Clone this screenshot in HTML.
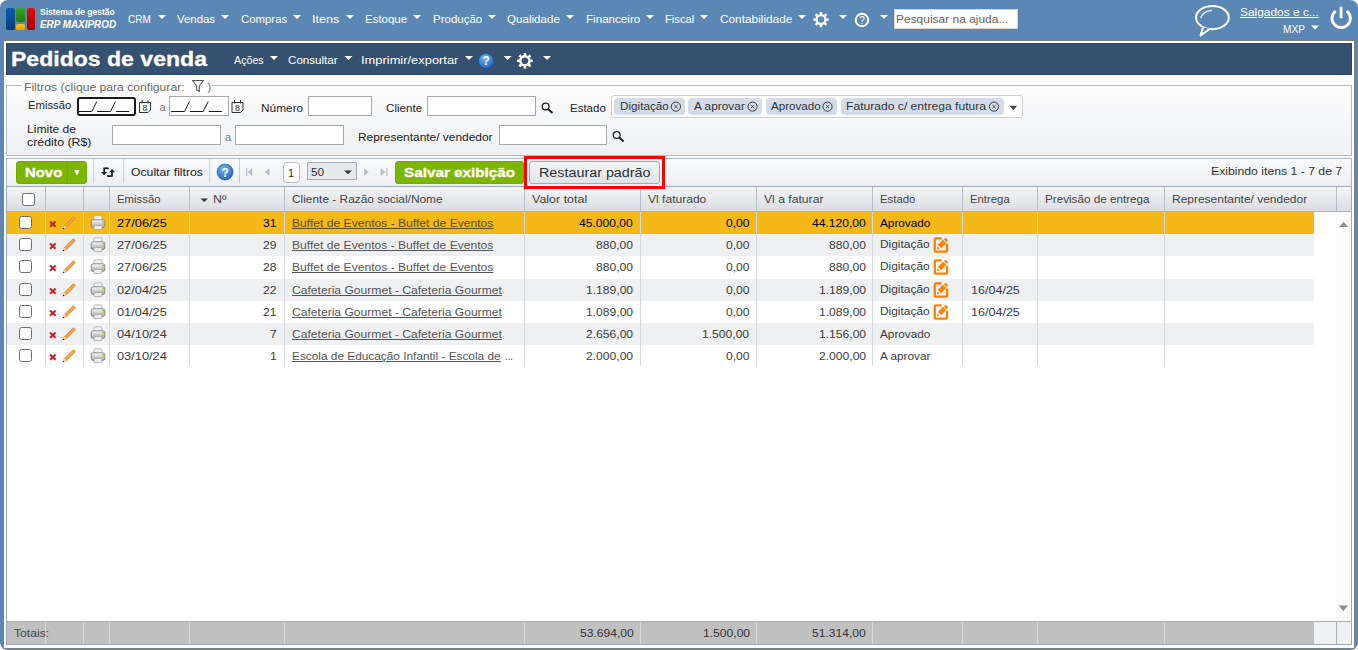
<!DOCTYPE html>
<html><head><meta charset="utf-8"><style>
html,body{margin:0;padding:0;}
body{width:1358px;height:650px;position:relative;overflow:hidden;background:#f6f5f2;font-family:"Liberation Sans", sans-serif;}
.a{position:absolute;box-sizing:border-box;}
.t{position:absolute;white-space:nowrap;font-family:"Liberation Sans", sans-serif;transform-origin:0 0;}
svg{position:absolute;overflow:visible;}
</style></head><body>
<!-- outer blue -->
<div class="a" style="left:0;top:0;width:1358px;height:650px;background:#5b87b4;border-radius:8px;"></div>
<!-- logo -->
<div class="a" style="left:6px;top:8px;width:8.6px;height:21.5px;border-radius:2px;background:linear-gradient(#0b5fa8,#083d7a);"></div>
<div class="a" style="left:16.3px;top:8px;width:8.3px;height:13.6px;border-radius:2px;background:linear-gradient(#3aa41c,#1f7a10);"></div>
<div class="a" style="left:16.3px;top:23.5px;width:8.3px;height:6px;border-radius:1.5px;background:linear-gradient(#f7c21a,#e8a200);"></div>
<div class="a" style="left:26.5px;top:8px;width:8.6px;height:21.5px;border-radius:2px;background:linear-gradient(#e01010,#a80000);"></div>
<!-- nav triangles -->
<svg width="1358" height="45" style="left:0;top:0">
 <g fill="#fff">
  <path d="M158 15h8l-4 4z"/><path d="M221 15h8l-4 4z"/><path d="M293 15h8l-4 4z"/><path d="M346 15h8l-4 4z"/>
  <path d="M413 15h8l-4 4z"/><path d="M488 15h8l-4 4z"/><path d="M566 15h8l-4 4z"/><path d="M646 15h8l-4 4z"/>
  <path d="M700 15h8l-4 4z"/><path d="M798 15h8l-4 4z"/><path d="M839 15h8l-4 4z"/><path d="M880 15h8l-4 4z"/>
  <path d="M1311 25.4h8l-4 4z"/>
 </g>
 <!-- gear top -->
<g transform="translate(821,19.6)">
 <circle r="4.45" fill="none" stroke="#fff" stroke-width="2.30"/>
 <g fill="#fff">
  <rect x="-1.25" y="-7.60" width="2.50" height="2.60" transform="rotate(0)"/>
  <rect x="-1.25" y="-7.60" width="2.50" height="2.60" transform="rotate(45)"/>
  <rect x="-1.25" y="-7.60" width="2.50" height="2.60" transform="rotate(90)"/>
  <rect x="-1.25" y="-7.60" width="2.50" height="2.60" transform="rotate(135)"/>
  <rect x="-1.25" y="-7.60" width="2.50" height="2.60" transform="rotate(180)"/>
  <rect x="-1.25" y="-7.60" width="2.50" height="2.60" transform="rotate(225)"/>
  <rect x="-1.25" y="-7.60" width="2.50" height="2.60" transform="rotate(270)"/>
  <rect x="-1.25" y="-7.60" width="2.50" height="2.60" transform="rotate(315)"/>
 </g>
</g>
 <!-- help top -->
 <circle cx="862" cy="20" r="6.2" fill="none" stroke="#fff" stroke-width="2"/>
 <text x="862" y="23.6" font-family="Liberation Sans" font-size="10" fill="#fff" text-anchor="middle">?</text>
 <!-- chat bubble -->
 <g fill="none" stroke="#fff" stroke-width="2">
  <ellipse cx="1212.4" cy="17.6" rx="16.4" ry="11.6"/>
 </g>
 <path d="M1203 27.5 L1200.5 35.5 L1210 28.8" fill="#5b87b4" stroke="#fff" stroke-width="2" stroke-linejoin="round"/>
 <path d="M1200.5 18 Q1203 11 1212 10.5" fill="none" stroke="#fff" stroke-width="1.3" opacity="0.85"/>
 <!-- power -->
 <path d="M1335.7 11.0 A9.2 9.2 0 1 0 1346.7 11.0" fill="none" stroke="#fff" stroke-width="2.8"/>
 <line x1="1341.1" y1="7.8" x2="1341.1" y2="17.2" stroke="#fff" stroke-width="2.8" stroke-linecap="round"/>
</svg>
<!-- search input -->
<div class="a" style="left:894px;top:9px;width:124px;height:20px;background:#fff;border:1px solid #d8d4cc;"></div>
<!-- light corners top-right/bottom -->
<!-- white frame -->
<div class="a" style="left:3px;top:40px;width:1352px;height:609px;background:#fff;border:1px solid #808080;"></div>
<!-- page header -->
<div class="a" style="left:6px;top:43px;width:1346px;height:32px;background:#35516f;border:1px solid #27476b;"></div>
<svg width="1358" height="100" style="left:0;top:0">
 <g fill="#fff"><path d="M270 56h8l-4 4z"/><path d="M344.5 56h8l-4 4z"/><path d="M465 56h8l-4 4z"/><path d="M503.6 56h8l-4 4z"/><path d="M543 56h8l-4 4z"/></g>
 <defs><radialGradient id="hg" cx="0.4" cy="0.3" r="0.8"><stop offset="0" stop-color="#6fb0f0"/><stop offset="1" stop-color="#1c5bb8"/></radialGradient></defs>
 <circle cx="486.1" cy="61" r="7.6" fill="url(#hg)" stroke="#1a4f9e" stroke-width="0.6"/>
 <text x="486.1" y="65.3" font-family="Liberation Sans" font-size="12" font-weight="bold" fill="#fff" text-anchor="middle">?</text>
<g transform="translate(524.9,60.8)">
 <circle r="4.60" fill="none" stroke="#fff" stroke-width="2.40"/>
 <g fill="#fff">
  <rect x="-1.30" y="-7.80" width="2.60" height="2.60" transform="rotate(0)"/>
  <rect x="-1.30" y="-7.80" width="2.60" height="2.60" transform="rotate(45)"/>
  <rect x="-1.30" y="-7.80" width="2.60" height="2.60" transform="rotate(90)"/>
  <rect x="-1.30" y="-7.80" width="2.60" height="2.60" transform="rotate(135)"/>
  <rect x="-1.30" y="-7.80" width="2.60" height="2.60" transform="rotate(180)"/>
  <rect x="-1.30" y="-7.80" width="2.60" height="2.60" transform="rotate(225)"/>
  <rect x="-1.30" y="-7.80" width="2.60" height="2.60" transform="rotate(270)"/>
  <rect x="-1.30" y="-7.80" width="2.60" height="2.60" transform="rotate(315)"/>
 </g>
</g>
</svg>
<!-- fieldset -->
<div class="a" style="left:6px;top:85px;width:1346px;height:71px;border:1px solid #b2bac4;background:linear-gradient(#fdfdfd,#eef0f3);"></div>
<div class="a" style="left:22px;top:80px;width:190px;height:10px;background:#fdfdfd;"></div>
<svg width="20" height="20" style="left:0;top:0">
 <path d="M192.5 80.5 H203.5 L199.3 86 V91.5 L196.7 90 V86 Z" fill="none" stroke="#555" stroke-width="1.1" stroke-linejoin="round"/>
</svg>
<!-- inputs -->
<div class="a" style="left:76.5px;top:96.7px;width:59px;height:19px;border:2px solid #1a1a1a;border-radius:3px;background:#fff;"></div>
<div class="a" style="left:169.4px;top:96.2px;width:59.5px;height:19.4px;border:1px solid #a9a9a9;background:#fff;"></div>
<div class="a" style="left:308.3px;top:96.2px;width:63.5px;height:19.4px;border:1px solid #a9a9a9;background:#fff;"></div>
<div class="a" style="left:427.3px;top:96.2px;width:108.3px;height:19.6px;border:1px solid #a9a9a9;background:#fff;"></div>
<div class="a" style="left:111.8px;top:125px;width:109px;height:20px;border:1px solid #a9a9a9;background:#fff;"></div>
<div class="a" style="left:235px;top:125px;width:109px;height:20px;border:1px solid #a9a9a9;background:#fff;"></div>
<div class="a" style="left:498.5px;top:125.3px;width:108.2px;height:19.4px;border:1px solid #a9a9a9;background:#fff;"></div>
<svg width="1358" height="200" style="left:0;top:0">
 <!-- date masks -->
 <g stroke="#1a1a1a" stroke-width="1" fill="none">
  <path d="M78.5 111.5h13.2M97.2 111.5h13.2M116 111.5h13.2M91.8 111.5 L96.8 101.5M110.5 111.5 L115.5 101.5"/>
  <path d="M171.2 111.5h13.2M189.9 111.5h13.2M208.7 111.5h13.2M184.5 111.5 L189.5 101.5M203.2 111.5 L208.2 101.5"/>
 </g>
 <!-- calendars -->
 <g fill="none" stroke="#333" stroke-width="1">
  <path d="M139.5 102.5 H150.5 V110 L148 112.5 H139.5 Z"/>
  <path d="M142 100v3.5M148 100v3.5"/>
  <path d="M232 102.5 H243 V110 L240.5 112.5 H232 Z"/>
  <path d="M234.5 100v3.5M240.5 100v3.5"/>
 </g>
 <text x="145" y="111" font-family="Liberation Sans" font-size="9" fill="#333" text-anchor="middle">8</text>
 <text x="237.5" y="111" font-family="Liberation Sans" font-size="9" fill="#333" text-anchor="middle">8</text>
 <!-- search icons -->
 <g stroke="#222" fill="none">
  <circle cx="545.6" cy="106.6" r="3.4" stroke-width="1.3"/><path d="M548.2 109.2 L552.5 113" stroke-width="2"/>
  <circle cx="616.7" cy="135" r="3.4" stroke-width="1.3"/><path d="M619.3 137.6 L623.6 141.4" stroke-width="2"/>
 </g>
</svg>
<!-- estado tag box -->
<div class="a" style="left:610.7px;top:95.3px;width:412px;height:22.3px;border:1px solid #c9d0d8;border-radius:3px;background:#fff;"></div>
<div class="a" style="left:614.2px;top:98.1px;width:71.3px;height:16.7px;border-radius:4px;background:#d3dde9;"></div>
<div class="a" style="left:688.1px;top:98.1px;width:74.4px;height:16.7px;border-radius:4px;background:#d3dde9;"></div>
<div class="a" style="left:765.5px;top:98.1px;width:71.7px;height:16.7px;border-radius:4px;background:#d3dde9;"></div>
<div class="a" style="left:840.5px;top:98.1px;width:163.2px;height:16.7px;border-radius:4px;background:#d3dde9;"></div>
<svg width="1358" height="200" style="left:0;top:0">
 <g fill="none" stroke="#3a3a3a" stroke-width="1.0">
  <circle cx="675.9" cy="106.6" r="4.6"/><path d="M674.3 105l3.2 3.2M677.5 105l-3.2 3.2" stroke-width="0.9"/>
  <circle cx="752.5" cy="106.6" r="4.6"/><path d="M750.9 105l3.2 3.2M754.1 105l-3.2 3.2" stroke-width="0.9"/>
  <circle cx="827.5" cy="106.6" r="4.6"/><path d="M825.9 105l3.2 3.2M829.1 105l-3.2 3.2" stroke-width="0.9"/>
  <circle cx="994" cy="106.6" r="4.6"/><path d="M992.4 105l3.2 3.2M995.6 105l-3.2 3.2" stroke-width="0.9"/>
 </g>
 <path d="M1009.7 105.7h7.3l-3.65 4.6z" fill="#444"/>
</svg>
<!-- toolbar panel -->
<div class="a" style="left:6px;top:158px;width:1346px;height:29px;border:1px solid #aab3be;border-bottom:none;background:linear-gradient(#f9fafb,#eceef1);"></div>
<div class="a" style="left:16.2px;top:161.2px;width:70.5px;height:22.7px;border-radius:3px;background:#7cb600;border:1px solid #74ab00;"></div>
<div class="a" style="left:67.2px;top:161.2px;width:1px;height:22.7px;background:#70a600;"></div>
<svg width="1358" height="200" style="left:0;top:0">
 <path d="M74.2 170h5.5l-2.75 5.8z" fill="#fff"/>
 <g fill="#c9ced5"><rect x="93.2" y="159" width="1" height="24"/><rect x="123" y="159" width="1" height="24"/><rect x="209.3" y="159" width="1" height="24"/><rect x="239" y="159" width="1" height="24"/></g>
 <!-- refresh -->
 <g fill="none" stroke="#222" stroke-width="1.8">
  <path d="M108.6 168.8 Q107 167.6 104.2 168.4 L104.2 173"/>
  <path d="M107.2 175.4 Q109 176.6 112 175.8 L112 171.4"/>
 </g>
 <path d="M101 172 L107.3 172 L104.15 175.2 Z" fill="#222"/>
 <path d="M109 172.2 L115 172.2 L112 169 Z" fill="#222"/>
 <!-- help blue -->
 <defs><radialGradient id="hg2" cx="0.4" cy="0.3" r="0.8"><stop offset="0" stop-color="#78b6f2"/><stop offset="1" stop-color="#1d5cb8"/></radialGradient></defs>
 <circle cx="225.1" cy="172" r="8" fill="url(#hg2)" stroke="#1a4f9e" stroke-width="0.6"/>
 <text x="225.1" y="176.5" font-family="Liberation Sans" font-size="12" font-weight="bold" fill="#fff" text-anchor="middle">?</text>
 <!-- pager -->
 <g fill="#b8bec6">
  <rect x="246" y="168" width="1.2" height="8"/><path d="M252.2 168v8l-4.4-4z"/>
  <path d="M269.4 168v8l-4.6-4z"/>
  <path d="M364.2 168v8l4.4-4z"/>
  <path d="M380.7 168v8l4.6-4z"/><rect x="386.3" y="168" width="1.2" height="8"/>
 </g>
</svg>
<div class="a" style="left:283.1px;top:161.5px;width:16.6px;height:21.1px;border:1px solid #b5bcc5;border-radius:4px;background:#fff;"></div>
<div class="a" style="left:307.3px;top:161.5px;width:49.6px;height:18.1px;border:1px solid #a8aeb6;background:#e6e8eb;"></div>
<svg width="1358" height="200" style="left:0;top:0"><path d="M344 170.4h8l-4 3.8z" fill="#333"/></svg>
<div class="a" style="left:395.2px;top:161.2px;width:128.4px;height:22.7px;border-radius:3px;background:#7cb600;border:1px solid #74ab00;"></div>
<div class="a" style="left:529.2px;top:161.2px;width:130.5px;height:22.7px;border:1px solid #a3a9b1;border-radius:3px;background:linear-gradient(#f4f5f7,#dfe2e6);"></div>
<!-- grid -->
<div class="a" style="left:6px;top:186px;width:1346px;height:459px;border:1px solid #9ea8b3;background:#fff;"></div>
<div class="a" style="left:7px;top:187px;width:1344px;height:25px;border-bottom:1px solid #a9b1bb;background:linear-gradient(#f4f5f7,#d9dce1);"></div>
<div class="a" style="left:45px;top:187px;width:1px;height:24px;background:#b6bdc6;"></div>
<div class="a" style="left:83px;top:187px;width:1px;height:24px;background:#b6bdc6;"></div>
<div class="a" style="left:109px;top:187px;width:1px;height:24px;background:#b6bdc6;"></div>
<div class="a" style="left:189px;top:187px;width:1px;height:24px;background:#b6bdc6;"></div>
<div class="a" style="left:284px;top:187px;width:1px;height:24px;background:#b6bdc6;"></div>
<div class="a" style="left:524px;top:187px;width:1px;height:24px;background:#b6bdc6;"></div>
<div class="a" style="left:640px;top:187px;width:1px;height:24px;background:#b6bdc6;"></div>
<div class="a" style="left:756px;top:187px;width:1px;height:24px;background:#b6bdc6;"></div>
<div class="a" style="left:872px;top:187px;width:1px;height:24px;background:#b6bdc6;"></div>
<div class="a" style="left:962px;top:187px;width:1px;height:24px;background:#b6bdc6;"></div>
<div class="a" style="left:1037px;top:187px;width:1px;height:24px;background:#b6bdc6;"></div>
<div class="a" style="left:1164px;top:187px;width:1px;height:24px;background:#b6bdc6;"></div>
<div class="a" style="left:1336px;top:187px;width:1px;height:24px;background:#b6bdc6;"></div>
<div class="a" style="left:7px;top:212px;width:1307px;height:22px;background:#f4b916;"></div>
<div class="a" style="left:7px;top:234px;width:1307px;height:22px;background:#eff0f2;"></div>
<div class="a" style="left:7px;top:256px;width:1307px;height:23px;background:#ffffff;"></div>
<div class="a" style="left:7px;top:279px;width:1307px;height:22px;background:#eff0f2;"></div>
<div class="a" style="left:7px;top:301px;width:1307px;height:22px;background:#ffffff;"></div>
<div class="a" style="left:7px;top:323px;width:1307px;height:22px;background:#eff0f2;"></div>
<div class="a" style="left:7px;top:345px;width:1307px;height:21px;background:#ffffff;"></div>
<div class="a" style="left:45px;top:212px;width:1px;height:154px;background:#d5d9df;"></div>
<div class="a" style="left:83px;top:212px;width:1px;height:154px;background:#d5d9df;"></div>
<div class="a" style="left:109px;top:212px;width:1px;height:154px;background:#d5d9df;"></div>
<div class="a" style="left:189px;top:212px;width:1px;height:154px;background:#d5d9df;"></div>
<div class="a" style="left:284px;top:212px;width:1px;height:154px;background:#d5d9df;"></div>
<div class="a" style="left:524px;top:212px;width:1px;height:154px;background:#d5d9df;"></div>
<div class="a" style="left:640px;top:212px;width:1px;height:154px;background:#d5d9df;"></div>
<div class="a" style="left:756px;top:212px;width:1px;height:154px;background:#d5d9df;"></div>
<div class="a" style="left:872px;top:212px;width:1px;height:154px;background:#d5d9df;"></div>
<div class="a" style="left:962px;top:212px;width:1px;height:154px;background:#d5d9df;"></div>
<div class="a" style="left:1037px;top:212px;width:1px;height:154px;background:#d5d9df;"></div>
<div class="a" style="left:1164px;top:212px;width:1px;height:154px;background:#d5d9df;"></div>
<div class="a" style="left:1336px;top:212px;width:15px;height:409px;background:#fbfbfb;"></div>
<svg width="1358" height="650" style="left:0;top:0"><path d="M1339 227h9.2l-4.6-5z" fill="#8c8c8c"/><path d="M1338.6 605.6h9.4l-4.7 5.3z" fill="#8c8c8c"/></svg>
<div class="a" style="left:7px;top:621px;width:1344px;height:23px;border-top:1px solid #a6aeb8;background:#eff0f2;"></div>
<div class="a" style="left:7px;top:622px;width:1307px;height:22px;background:#c0c0c0;"></div>
<div class="a" style="left:45px;top:622px;width:1px;height:22px;background:#d9d9d9;"></div>
<div class="a" style="left:83px;top:622px;width:1px;height:22px;background:#d9d9d9;"></div>
<div class="a" style="left:109px;top:622px;width:1px;height:22px;background:#d9d9d9;"></div>
<div class="a" style="left:189px;top:622px;width:1px;height:22px;background:#d9d9d9;"></div>
<div class="a" style="left:284px;top:622px;width:1px;height:22px;background:#d9d9d9;"></div>
<div class="a" style="left:524px;top:622px;width:1px;height:22px;background:#d9d9d9;"></div>
<div class="a" style="left:640px;top:622px;width:1px;height:22px;background:#d9d9d9;"></div>
<div class="a" style="left:756px;top:622px;width:1px;height:22px;background:#d9d9d9;"></div>
<div class="a" style="left:872px;top:622px;width:1px;height:22px;background:#d9d9d9;"></div>
<div class="a" style="left:962px;top:622px;width:1px;height:22px;background:#d9d9d9;"></div>
<div class="a" style="left:1037px;top:622px;width:1px;height:22px;background:#d9d9d9;"></div>
<div class="a" style="left:1164px;top:622px;width:1px;height:22px;background:#d9d9d9;"></div>
<div class="a" style="left:1336px;top:622px;width:1px;height:22px;background:#a6aeb8;"></div>
<div class="a" style="left:22.2px;top:193.3px;width:12.6px;height:12.6px;border:1px solid #6e6e6e;border-radius:2.5px;background:#fff;"></div>
<svg width="1358" height="650" style="left:0;top:0"><path d="M200.5 198.5h7.4l-3.7 3.6z" fill="#333"/></svg>
<div class="a" style="left:19.2px;top:216.3px;width:12.6px;height:12.6px;border:1px solid #6e6e6e;border-radius:2.5px;background:#fff;"></div>
<div class="a" style="left:19.2px;top:238.3px;width:12.6px;height:12.6px;border:1px solid #6e6e6e;border-radius:2.5px;background:#fff;"></div>
<div class="a" style="left:19.2px;top:260.3px;width:12.6px;height:12.6px;border:1px solid #6e6e6e;border-radius:2.5px;background:#fff;"></div>
<div class="a" style="left:19.2px;top:283.3px;width:12.6px;height:12.6px;border:1px solid #6e6e6e;border-radius:2.5px;background:#fff;"></div>
<div class="a" style="left:19.2px;top:305.3px;width:12.6px;height:12.6px;border:1px solid #6e6e6e;border-radius:2.5px;background:#fff;"></div>
<div class="a" style="left:19.2px;top:327.3px;width:12.6px;height:12.6px;border:1px solid #6e6e6e;border-radius:2.5px;background:#fff;"></div>
<div class="a" style="left:19.2px;top:349.3px;width:12.6px;height:12.6px;border:1px solid #6e6e6e;border-radius:2.5px;background:#fff;"></div>
<svg width="1358" height="650" style="left:0;top:0">
<defs><linearGradient id="pb" x1="0" y1="0" x2="0" y2="1"><stop offset="0" stop-color="#fbfbfb"/><stop offset="1" stop-color="#a6a6a6"/></linearGradient></defs>
<path d="M50 221.5l5.6 5.2M55.6 221.5l-5.6 5.2" stroke="#c8202c" stroke-width="2" fill="none"/>
<path d="M64.5 227.6 L74.6 217.4" stroke="#e8892a" stroke-width="3.4" stroke-linecap="butt"/>
<path d="M64.7 227.4 L74.4 217.6" stroke="#f6b468" stroke-width="1.2"/>
<path d="M63.2 228.8 L64.0 225.6 L66.4 228.0 Z" fill="#f3dcc0"/>
<circle cx="63.6" cy="228.5" r="0.8" fill="#222"/>
<rect x="94" y="215.8" width="8" height="5" rx="1" fill="#f2f2f2" stroke="#a8a8a8" stroke-width="0.7"/>
<rect x="91.2" y="219.8" width="13.6" height="7.6" rx="2" fill="url(#pb)" stroke="#707070" stroke-width="0.8"/>
<rect x="94" y="225.4" width="8" height="4.2" rx="0.8" fill="#ececec" stroke="#9a9a9a" stroke-width="0.7"/>
<circle cx="103" cy="221.8" r="0.8" fill="#3cc23c"/><circle cx="103" cy="223.9" r="0.8" fill="#f2b400"/>
<path d="M50 243.5l5.6 5.2M55.6 243.5l-5.6 5.2" stroke="#c8202c" stroke-width="2" fill="none"/>
<path d="M64.5 249.6 L74.6 239.4" stroke="#e8892a" stroke-width="3.4" stroke-linecap="butt"/>
<path d="M64.7 249.4 L74.4 239.6" stroke="#f6b468" stroke-width="1.2"/>
<path d="M63.2 250.8 L64.0 247.6 L66.4 250.0 Z" fill="#f3dcc0"/>
<circle cx="63.6" cy="250.5" r="0.8" fill="#222"/>
<rect x="94" y="237.8" width="8" height="5" rx="1" fill="#f2f2f2" stroke="#a8a8a8" stroke-width="0.7"/>
<rect x="91.2" y="241.8" width="13.6" height="7.6" rx="2" fill="url(#pb)" stroke="#707070" stroke-width="0.8"/>
<rect x="94" y="247.4" width="8" height="4.2" rx="0.8" fill="#ececec" stroke="#9a9a9a" stroke-width="0.7"/>
<circle cx="103" cy="243.8" r="0.8" fill="#3cc23c"/><circle cx="103" cy="245.9" r="0.8" fill="#f2b400"/>
<path d="M941.6 238.4 H935.9 Q934.8 238.4 934.8 239.5 V250.6 Q934.8 251.7 935.9 251.7 H946 Q947.1 251.7 947.1 250.6 V243.8" fill="none" stroke="#ff8000" stroke-width="2.3"/>
<path d="M939.5 246.5 L944.7 241.3" stroke="#ff8000" stroke-width="4.6"/>
<path d="M945.2 237.9 Q947.6 238.2 948 240.6 L946.6 242.0 L943.8 239.3 Z" fill="#ff8000"/>
<path d="M936.9 249.2 L937.6 246.6 L939.6 248.6 Z" fill="#ff8000"/>
<path d="M50 265.5l5.6 5.2M55.6 265.5l-5.6 5.2" stroke="#c8202c" stroke-width="2" fill="none"/>
<path d="M64.5 271.6 L74.6 261.4" stroke="#e8892a" stroke-width="3.4" stroke-linecap="butt"/>
<path d="M64.7 271.4 L74.4 261.6" stroke="#f6b468" stroke-width="1.2"/>
<path d="M63.2 272.8 L64.0 269.6 L66.4 272.0 Z" fill="#f3dcc0"/>
<circle cx="63.6" cy="272.5" r="0.8" fill="#222"/>
<rect x="94" y="259.8" width="8" height="5" rx="1" fill="#f2f2f2" stroke="#a8a8a8" stroke-width="0.7"/>
<rect x="91.2" y="263.8" width="13.6" height="7.6" rx="2" fill="url(#pb)" stroke="#707070" stroke-width="0.8"/>
<rect x="94" y="269.4" width="8" height="4.2" rx="0.8" fill="#ececec" stroke="#9a9a9a" stroke-width="0.7"/>
<circle cx="103" cy="265.8" r="0.8" fill="#3cc23c"/><circle cx="103" cy="267.9" r="0.8" fill="#f2b400"/>
<path d="M941.6 260.4 H935.9 Q934.8 260.4 934.8 261.5 V272.6 Q934.8 273.7 935.9 273.7 H946 Q947.1 273.7 947.1 272.6 V265.8" fill="none" stroke="#ff8000" stroke-width="2.3"/>
<path d="M939.5 268.5 L944.7 263.3" stroke="#ff8000" stroke-width="4.6"/>
<path d="M945.2 259.9 Q947.6 260.2 948 262.6 L946.6 264.0 L943.8 261.3 Z" fill="#ff8000"/>
<path d="M936.9 271.2 L937.6 268.6 L939.6 270.6 Z" fill="#ff8000"/>
<path d="M50 288.5l5.6 5.2M55.6 288.5l-5.6 5.2" stroke="#c8202c" stroke-width="2" fill="none"/>
<path d="M64.5 294.6 L74.6 284.4" stroke="#e8892a" stroke-width="3.4" stroke-linecap="butt"/>
<path d="M64.7 294.4 L74.4 284.6" stroke="#f6b468" stroke-width="1.2"/>
<path d="M63.2 295.8 L64.0 292.6 L66.4 295.0 Z" fill="#f3dcc0"/>
<circle cx="63.6" cy="295.5" r="0.8" fill="#222"/>
<rect x="94" y="282.8" width="8" height="5" rx="1" fill="#f2f2f2" stroke="#a8a8a8" stroke-width="0.7"/>
<rect x="91.2" y="286.8" width="13.6" height="7.6" rx="2" fill="url(#pb)" stroke="#707070" stroke-width="0.8"/>
<rect x="94" y="292.4" width="8" height="4.2" rx="0.8" fill="#ececec" stroke="#9a9a9a" stroke-width="0.7"/>
<circle cx="103" cy="288.8" r="0.8" fill="#3cc23c"/><circle cx="103" cy="290.9" r="0.8" fill="#f2b400"/>
<path d="M941.6 283.4 H935.9 Q934.8 283.4 934.8 284.5 V295.6 Q934.8 296.7 935.9 296.7 H946 Q947.1 296.7 947.1 295.6 V288.8" fill="none" stroke="#ff8000" stroke-width="2.3"/>
<path d="M939.5 291.5 L944.7 286.3" stroke="#ff8000" stroke-width="4.6"/>
<path d="M945.2 282.9 Q947.6 283.2 948 285.6 L946.6 287.0 L943.8 284.3 Z" fill="#ff8000"/>
<path d="M936.9 294.2 L937.6 291.6 L939.6 293.6 Z" fill="#ff8000"/>
<path d="M50 310.5l5.6 5.2M55.6 310.5l-5.6 5.2" stroke="#c8202c" stroke-width="2" fill="none"/>
<path d="M64.5 316.6 L74.6 306.4" stroke="#e8892a" stroke-width="3.4" stroke-linecap="butt"/>
<path d="M64.7 316.4 L74.4 306.6" stroke="#f6b468" stroke-width="1.2"/>
<path d="M63.2 317.8 L64.0 314.6 L66.4 317.0 Z" fill="#f3dcc0"/>
<circle cx="63.6" cy="317.5" r="0.8" fill="#222"/>
<rect x="94" y="304.8" width="8" height="5" rx="1" fill="#f2f2f2" stroke="#a8a8a8" stroke-width="0.7"/>
<rect x="91.2" y="308.8" width="13.6" height="7.6" rx="2" fill="url(#pb)" stroke="#707070" stroke-width="0.8"/>
<rect x="94" y="314.4" width="8" height="4.2" rx="0.8" fill="#ececec" stroke="#9a9a9a" stroke-width="0.7"/>
<circle cx="103" cy="310.8" r="0.8" fill="#3cc23c"/><circle cx="103" cy="312.9" r="0.8" fill="#f2b400"/>
<path d="M941.6 305.4 H935.9 Q934.8 305.4 934.8 306.5 V317.6 Q934.8 318.7 935.9 318.7 H946 Q947.1 318.7 947.1 317.6 V310.8" fill="none" stroke="#ff8000" stroke-width="2.3"/>
<path d="M939.5 313.5 L944.7 308.3" stroke="#ff8000" stroke-width="4.6"/>
<path d="M945.2 304.9 Q947.6 305.2 948 307.6 L946.6 309.0 L943.8 306.3 Z" fill="#ff8000"/>
<path d="M936.9 316.2 L937.6 313.6 L939.6 315.6 Z" fill="#ff8000"/>
<path d="M50 332.5l5.6 5.2M55.6 332.5l-5.6 5.2" stroke="#c8202c" stroke-width="2" fill="none"/>
<path d="M64.5 338.6 L74.6 328.4" stroke="#e8892a" stroke-width="3.4" stroke-linecap="butt"/>
<path d="M64.7 338.4 L74.4 328.6" stroke="#f6b468" stroke-width="1.2"/>
<path d="M63.2 339.8 L64.0 336.6 L66.4 339.0 Z" fill="#f3dcc0"/>
<circle cx="63.6" cy="339.5" r="0.8" fill="#222"/>
<rect x="94" y="326.8" width="8" height="5" rx="1" fill="#f2f2f2" stroke="#a8a8a8" stroke-width="0.7"/>
<rect x="91.2" y="330.8" width="13.6" height="7.6" rx="2" fill="url(#pb)" stroke="#707070" stroke-width="0.8"/>
<rect x="94" y="336.4" width="8" height="4.2" rx="0.8" fill="#ececec" stroke="#9a9a9a" stroke-width="0.7"/>
<circle cx="103" cy="332.8" r="0.8" fill="#3cc23c"/><circle cx="103" cy="334.9" r="0.8" fill="#f2b400"/>
<path d="M50 354.5l5.6 5.2M55.6 354.5l-5.6 5.2" stroke="#c8202c" stroke-width="2" fill="none"/>
<path d="M64.5 360.6 L74.6 350.4" stroke="#e8892a" stroke-width="3.4" stroke-linecap="butt"/>
<path d="M64.7 360.4 L74.4 350.6" stroke="#f6b468" stroke-width="1.2"/>
<path d="M63.2 361.8 L64.0 358.6 L66.4 361.0 Z" fill="#f3dcc0"/>
<circle cx="63.6" cy="361.5" r="0.8" fill="#222"/>
<rect x="94" y="348.8" width="8" height="5" rx="1" fill="#f2f2f2" stroke="#a8a8a8" stroke-width="0.7"/>
<rect x="91.2" y="352.8" width="13.6" height="7.6" rx="2" fill="url(#pb)" stroke="#707070" stroke-width="0.8"/>
<rect x="94" y="358.4" width="8" height="4.2" rx="0.8" fill="#ececec" stroke="#9a9a9a" stroke-width="0.7"/>
<circle cx="103" cy="354.8" r="0.8" fill="#3cc23c"/><circle cx="103" cy="356.9" r="0.8" fill="#f2b400"/>
</svg>
<div class="a" style="left:524px;top:156px;width:141px;height:33px;border:3px solid #ff0000;"></div>
<div class="t" style="left:128.40px;top:13.70px;font-size:11px;line-height:11px;color:#ffffff;transform:scaleX(0.9121);">CRM</div>
<div class="t" style="left:176.70px;top:13.70px;font-size:11px;line-height:11px;color:#ffffff;transform:scaleX(1.0376);">Vendas</div>
<div class="t" style="left:240.70px;top:13.70px;font-size:11px;line-height:11px;color:#ffffff;transform:scaleX(1.0349);">Compras</div>
<div class="t" style="left:311.86px;top:13.70px;font-size:11px;line-height:11px;color:#ffffff;transform:scaleX(1.1436);">Itens</div>
<div class="t" style="left:365.30px;top:13.70px;font-size:11px;line-height:11px;color:#ffffff;transform:scaleX(1.0436);">Estoque</div>
<div class="t" style="left:432.90px;top:13.70px;font-size:11px;line-height:11px;color:#ffffff;transform:scaleX(1.0453);">Produção</div>
<div class="t" style="left:507.30px;top:13.70px;font-size:11px;line-height:11px;color:#ffffff;transform:scaleX(1.0533);">Qualidade</div>
<div class="t" style="left:585.60px;top:13.70px;font-size:11px;line-height:11px;color:#ffffff;transform:scaleX(1.0558);">Financeiro</div>
<div class="t" style="left:665.30px;top:13.70px;font-size:11px;line-height:11px;color:#ffffff;transform:scaleX(1.0219);">Fiscal</div>
<div class="t" style="left:719.80px;top:13.70px;font-size:11px;line-height:11px;color:#ffffff;transform:scaleX(1.0751);">Contabilidade</div>
<div class="t" style="left:39.80px;top:8.00px;font-size:9px;line-height:9px;color:#ffffff;font-weight:bold;transform:scaleX(0.9443);">Sistema de gestão</div>
<div class="t" style="left:39.60px;top:19.60px;font-size:10px;line-height:10px;color:#ffffff;font-weight:bold;font-style:italic;transform:scaleX(0.9895);">ERP MAXIPROD</div>
<div class="t" style="left:896.40px;top:13.60px;font-size:11px;line-height:11px;color:#6a5f55;transform:scaleX(1.0872);">Pesquisar na ajuda...</div>
<div class="t" style="left:1240.00px;top:6.80px;font-size:11px;line-height:11px;color:#ffffff;transform:scaleX(1.0824);text-decoration:underline;">Salgados e c...</div>
<div class="t" style="left:1282.80px;top:23.80px;font-size:11px;line-height:11px;color:#ffffff;transform:scaleX(0.9234);">MXP</div>
<div class="t" style="left:10.55px;top:49.00px;font-size:20px;line-height:20px;color:#ffffff;font-weight:bold;transform:scaleX(1.1523);-webkit-text-stroke:0.3px #fff;">Pedidos de venda</div>
<div class="t" style="left:233.80px;top:55.20px;font-size:11px;line-height:11px;color:#ffffff;transform:scaleX(0.9719);">Ações</div>
<div class="t" style="left:288.00px;top:55.20px;font-size:11px;line-height:11px;color:#ffffff;transform:scaleX(1.0545);">Consultar</div>
<div class="t" style="left:360.53px;top:55.20px;font-size:11px;line-height:11px;color:#ffffff;transform:scaleX(1.1715);">Imprimir/exportar</div>
<div class="t" style="left:24.30px;top:82.40px;font-size:11px;line-height:11px;color:#6e6a66;transform:scaleX(1.1035);">Filtros (clique para configurar:</div>
<div class="t" style="left:207.50px;top:82.40px;font-size:11px;line-height:11px;color:#6e6a66;">)</div>
<div class="t" style="left:27.60px;top:100.20px;font-size:11px;line-height:11px;color:#1c1c24;transform:scaleX(1.0271);">Emissão</div>
<div class="t" style="left:159.60px;top:102.00px;font-size:11px;line-height:11px;color:#7a7a7a;">a</div>
<div class="t" style="left:261.30px;top:102.90px;font-size:11px;line-height:11px;color:#1c1c24;transform:scaleX(1.0793);">Número</div>
<div class="t" style="left:386.00px;top:102.70px;font-size:11px;line-height:11px;color:#1c1c24;transform:scaleX(1.0609);">Cliente</div>
<div class="t" style="left:569.60px;top:102.70px;font-size:11px;line-height:11px;color:#1c1c24;transform:scaleX(1.0460);">Estado</div>
<div class="t" style="left:27.40px;top:123.70px;font-size:11px;line-height:11px;color:#1c1c24;transform:scaleX(1.0985);">Limite de</div>
<div class="t" style="left:27.40px;top:136.80px;font-size:11px;line-height:11px;color:#1c1c24;transform:scaleX(1.1215);">crédito (R$)</div>
<div class="t" style="left:225.00px;top:131.60px;font-size:11px;line-height:11px;color:#7a7a7a;">a</div>
<div class="t" style="left:357.80px;top:131.50px;font-size:11px;line-height:11px;color:#1c1c24;transform:scaleX(1.0837);">Representante/ vendedor</div>
<div class="t" style="left:619.90px;top:101.30px;font-size:11px;line-height:11px;color:#333333;transform:scaleX(1.0625);">Digitação</div>
<div class="t" style="left:693.80px;top:101.30px;font-size:11px;line-height:11px;color:#333333;transform:scaleX(1.0806);">A aprovar</div>
<div class="t" style="left:770.60px;top:101.30px;font-size:11px;line-height:11px;color:#333333;transform:scaleX(1.0560);">Aprovado</div>
<div class="t" style="left:845.70px;top:101.30px;font-size:11px;line-height:11px;color:#333333;transform:scaleX(1.1010);">Faturado c/ entrega futura</div>
<div class="t" style="left:25.10px;top:166.00px;font-size:13px;line-height:13px;color:#ffffff;font-weight:bold;transform:scaleX(1.1456);-webkit-text-stroke:0.35px #fff;">Novo</div>
<div class="t" style="left:130.50px;top:166.80px;font-size:11px;line-height:11px;color:#1c1c24;transform:scaleX(1.1104);">Ocultar filtros</div>
<div class="t" style="left:288.00px;top:167.50px;font-size:11px;line-height:11px;color:#333;">1</div>
<div class="t" style="left:311.00px;top:166.50px;font-size:11px;line-height:11px;color:#333;transform:scaleX(1.0728);">50</div>
<div class="t" style="left:404.00px;top:166.60px;font-size:12px;line-height:12px;color:#ffffff;font-weight:bold;transform:scaleX(1.2716);-webkit-text-stroke:0.3px #fff;">Salvar exibição</div>
<div class="t" style="left:538.90px;top:166.60px;font-size:12px;line-height:12px;color:#2a2f3a;transform:scaleX(1.1941);">Restaurar padrão</div>
<div class="t" style="left:1211.00px;top:166.00px;font-size:11px;line-height:11px;color:#333;transform:scaleX(1.1111);">Exibindo itens 1 - 7 de 7</div>
<div class="t" style="left:117.00px;top:193.80px;font-size:11px;line-height:11px;color:#444;transform:scaleX(1.0318);">Emissão</div>
<div class="t" style="left:212.60px;top:193.80px;font-size:11px;line-height:11px;color:#444;transform:scaleX(1.1219);">Nº</div>
<div class="t" style="left:292.00px;top:193.80px;font-size:11px;line-height:11px;color:#444;transform:scaleX(1.0806);">Cliente - Razão social/Nome</div>
<div class="t" style="left:531.90px;top:193.80px;font-size:11px;line-height:11px;color:#444;transform:scaleX(1.1333);">Valor total</div>
<div class="t" style="left:648.10px;top:193.80px;font-size:11px;line-height:11px;color:#444;transform:scaleX(1.0964);">Vl faturado</div>
<div class="t" style="left:764.00px;top:193.80px;font-size:11px;line-height:11px;color:#444;transform:scaleX(1.1046);">Vl a faturar</div>
<div class="t" style="left:880.00px;top:193.80px;font-size:11px;line-height:11px;color:#444;transform:scaleX(1.0343);">Estado</div>
<div class="t" style="left:969.90px;top:193.80px;font-size:11px;line-height:11px;color:#444;transform:scaleX(1.0302);">Entrega</div>
<div class="t" style="left:1045.00px;top:193.80px;font-size:11px;line-height:11px;color:#444;transform:scaleX(1.0621);">Previsão de entrega</div>
<div class="t" style="left:1171.70px;top:193.80px;font-size:11px;line-height:11px;color:#444;transform:scaleX(1.0885);">Representante/ vendedor</div>
<div class="t" style="left:116.90px;top:217.80px;font-size:11px;line-height:11px;color:#000;transform:scaleX(1.1639);">27/06/25</div>
<div class="t" style="left:263.47px;top:217.80px;font-size:11px;line-height:11px;color:#000;transform:scaleX(1.1000);">31</div>
<div class="t" style="left:291.80px;top:217.80px;font-size:11px;line-height:11px;color:#5a4a2a;transform:scaleX(1.1000);text-decoration:underline;">Buffet de Eventos - Buffet de Eventos</div>
<div class="t" style="left:579.40px;top:217.80px;font-size:11px;line-height:11px;color:#000;transform:scaleX(1.1000);">45.000,00</div>
<div class="t" style="left:725.78px;top:217.80px;font-size:11px;line-height:11px;color:#000;transform:scaleX(1.1000);">0,00</div>
<div class="t" style="left:811.90px;top:217.80px;font-size:11px;line-height:11px;color:#000;transform:scaleX(1.1000);">44.120,00</div>
<div class="t" style="left:879.80px;top:217.80px;font-size:11px;line-height:11px;color:#000;transform:scaleX(1.0700);">Aprovado</div>
<div class="t" style="left:116.90px;top:239.80px;font-size:11px;line-height:11px;color:#3a3a3a;transform:scaleX(1.1639);">27/06/25</div>
<div class="t" style="left:263.47px;top:239.80px;font-size:11px;line-height:11px;color:#3a3a3a;transform:scaleX(1.1000);">29</div>
<div class="t" style="left:291.80px;top:239.80px;font-size:11px;line-height:11px;color:#555;transform:scaleX(1.1000);text-decoration:underline;">Buffet de Eventos - Buffet de Eventos</div>
<div class="t" style="left:596.22px;top:239.80px;font-size:11px;line-height:11px;color:#3a3a3a;transform:scaleX(1.1000);">880,00</div>
<div class="t" style="left:725.78px;top:239.80px;font-size:11px;line-height:11px;color:#3a3a3a;transform:scaleX(1.1000);">0,00</div>
<div class="t" style="left:828.72px;top:239.80px;font-size:11px;line-height:11px;color:#3a3a3a;transform:scaleX(1.1000);">880,00</div>
<div class="t" style="left:879.80px;top:238.80px;font-size:11px;line-height:11px;color:#3a3a3a;transform:scaleX(1.0822);">Digitação</div>
<div class="t" style="left:116.90px;top:261.80px;font-size:11px;line-height:11px;color:#3a3a3a;transform:scaleX(1.1639);">27/06/25</div>
<div class="t" style="left:263.47px;top:261.80px;font-size:11px;line-height:11px;color:#3a3a3a;transform:scaleX(1.1000);">28</div>
<div class="t" style="left:291.80px;top:261.80px;font-size:11px;line-height:11px;color:#555;transform:scaleX(1.1000);text-decoration:underline;">Buffet de Eventos - Buffet de Eventos</div>
<div class="t" style="left:596.22px;top:261.80px;font-size:11px;line-height:11px;color:#3a3a3a;transform:scaleX(1.1000);">880,00</div>
<div class="t" style="left:725.78px;top:261.80px;font-size:11px;line-height:11px;color:#3a3a3a;transform:scaleX(1.1000);">0,00</div>
<div class="t" style="left:828.72px;top:261.80px;font-size:11px;line-height:11px;color:#3a3a3a;transform:scaleX(1.1000);">880,00</div>
<div class="t" style="left:879.80px;top:260.80px;font-size:11px;line-height:11px;color:#3a3a3a;transform:scaleX(1.0822);">Digitação</div>
<div class="t" style="left:116.90px;top:284.80px;font-size:11px;line-height:11px;color:#3a3a3a;transform:scaleX(1.1639);">02/04/25</div>
<div class="t" style="left:263.47px;top:284.80px;font-size:11px;line-height:11px;color:#3a3a3a;transform:scaleX(1.1000);">22</div>
<div class="t" style="left:291.80px;top:284.80px;font-size:11px;line-height:11px;color:#555;transform:scaleX(1.1000);text-decoration:underline;">Cafeteria Gourmet - Cafeteria Gourmet</div>
<div class="t" style="left:586.13px;top:284.80px;font-size:11px;line-height:11px;color:#3a3a3a;transform:scaleX(1.1000);">1.189,00</div>
<div class="t" style="left:725.78px;top:284.80px;font-size:11px;line-height:11px;color:#3a3a3a;transform:scaleX(1.1000);">0,00</div>
<div class="t" style="left:818.63px;top:284.80px;font-size:11px;line-height:11px;color:#3a3a3a;transform:scaleX(1.1000);">1.189,00</div>
<div class="t" style="left:879.80px;top:283.80px;font-size:11px;line-height:11px;color:#3a3a3a;transform:scaleX(1.0822);">Digitação</div>
<div class="t" style="left:970.50px;top:284.80px;font-size:11px;line-height:11px;color:#3a3a3a;transform:scaleX(1.1405);">16/04/25</div>
<div class="t" style="left:116.90px;top:306.80px;font-size:11px;line-height:11px;color:#3a3a3a;transform:scaleX(1.1639);">01/04/25</div>
<div class="t" style="left:263.47px;top:306.80px;font-size:11px;line-height:11px;color:#3a3a3a;transform:scaleX(1.1000);">21</div>
<div class="t" style="left:291.80px;top:306.80px;font-size:11px;line-height:11px;color:#555;transform:scaleX(1.1000);text-decoration:underline;">Cafeteria Gourmet - Cafeteria Gourmet</div>
<div class="t" style="left:586.13px;top:306.80px;font-size:11px;line-height:11px;color:#3a3a3a;transform:scaleX(1.1000);">1.089,00</div>
<div class="t" style="left:725.78px;top:306.80px;font-size:11px;line-height:11px;color:#3a3a3a;transform:scaleX(1.1000);">0,00</div>
<div class="t" style="left:818.63px;top:306.80px;font-size:11px;line-height:11px;color:#3a3a3a;transform:scaleX(1.1000);">1.089,00</div>
<div class="t" style="left:879.80px;top:305.80px;font-size:11px;line-height:11px;color:#3a3a3a;transform:scaleX(1.0822);">Digitação</div>
<div class="t" style="left:970.50px;top:306.80px;font-size:11px;line-height:11px;color:#3a3a3a;transform:scaleX(1.1405);">16/04/25</div>
<div class="t" style="left:116.90px;top:328.80px;font-size:11px;line-height:11px;color:#3a3a3a;transform:scaleX(1.1639);">04/10/24</div>
<div class="t" style="left:270.20px;top:328.80px;font-size:11px;line-height:11px;color:#3a3a3a;transform:scaleX(1.1000);">7</div>
<div class="t" style="left:291.80px;top:328.80px;font-size:11px;line-height:11px;color:#555;transform:scaleX(1.1000);text-decoration:underline;">Cafeteria Gourmet - Cafeteria Gourmet</div>
<div class="t" style="left:586.13px;top:328.80px;font-size:11px;line-height:11px;color:#3a3a3a;transform:scaleX(1.1000);">2.656,00</div>
<div class="t" style="left:702.23px;top:328.80px;font-size:11px;line-height:11px;color:#3a3a3a;transform:scaleX(1.1000);">1.500,00</div>
<div class="t" style="left:818.63px;top:328.80px;font-size:11px;line-height:11px;color:#3a3a3a;transform:scaleX(1.1000);">1.156,00</div>
<div class="t" style="left:879.80px;top:328.80px;font-size:11px;line-height:11px;color:#3a3a3a;transform:scaleX(1.0700);">Aprovado</div>
<div class="t" style="left:116.90px;top:350.80px;font-size:11px;line-height:11px;color:#3a3a3a;transform:scaleX(1.1639);">03/10/24</div>
<div class="t" style="left:270.20px;top:350.80px;font-size:11px;line-height:11px;color:#3a3a3a;transform:scaleX(1.1000);">1</div>
<div class="t" style="left:291.80px;top:350.80px;font-size:11px;line-height:11px;color:#555;transform:scaleX(1.0763);text-decoration:underline;">Escola de Educação Infantil - Escola de </div>
<div class="t" style="left:505.14px;top:350.80px;font-size:11px;line-height:11px;color:#555;transform:scaleX(0.8629);">...</div>
<div class="t" style="left:586.13px;top:350.80px;font-size:11px;line-height:11px;color:#3a3a3a;transform:scaleX(1.1000);">2.000,00</div>
<div class="t" style="left:725.78px;top:350.80px;font-size:11px;line-height:11px;color:#3a3a3a;transform:scaleX(1.1000);">0,00</div>
<div class="t" style="left:818.63px;top:350.80px;font-size:11px;line-height:11px;color:#3a3a3a;transform:scaleX(1.1000);">2.000,00</div>
<div class="t" style="left:879.80px;top:350.80px;font-size:11px;line-height:11px;color:#3a3a3a;transform:scaleX(1.0700);">A aprovar</div>
<div class="t" style="left:14.00px;top:627.80px;font-size:11px;line-height:11px;color:#444;transform:scaleX(1.1029);">Totais:</div>
<div class="t" style="left:579.60px;top:627.80px;font-size:11px;line-height:11px;color:#333;transform:scaleX(1.1000);">53.694,00</div>
<div class="t" style="left:702.63px;top:627.80px;font-size:11px;line-height:11px;color:#333;transform:scaleX(1.1000);">1.500,00</div>
<div class="t" style="left:811.90px;top:627.80px;font-size:11px;line-height:11px;color:#333;transform:scaleX(1.1000);">51.314,00</div>
</body></html>
